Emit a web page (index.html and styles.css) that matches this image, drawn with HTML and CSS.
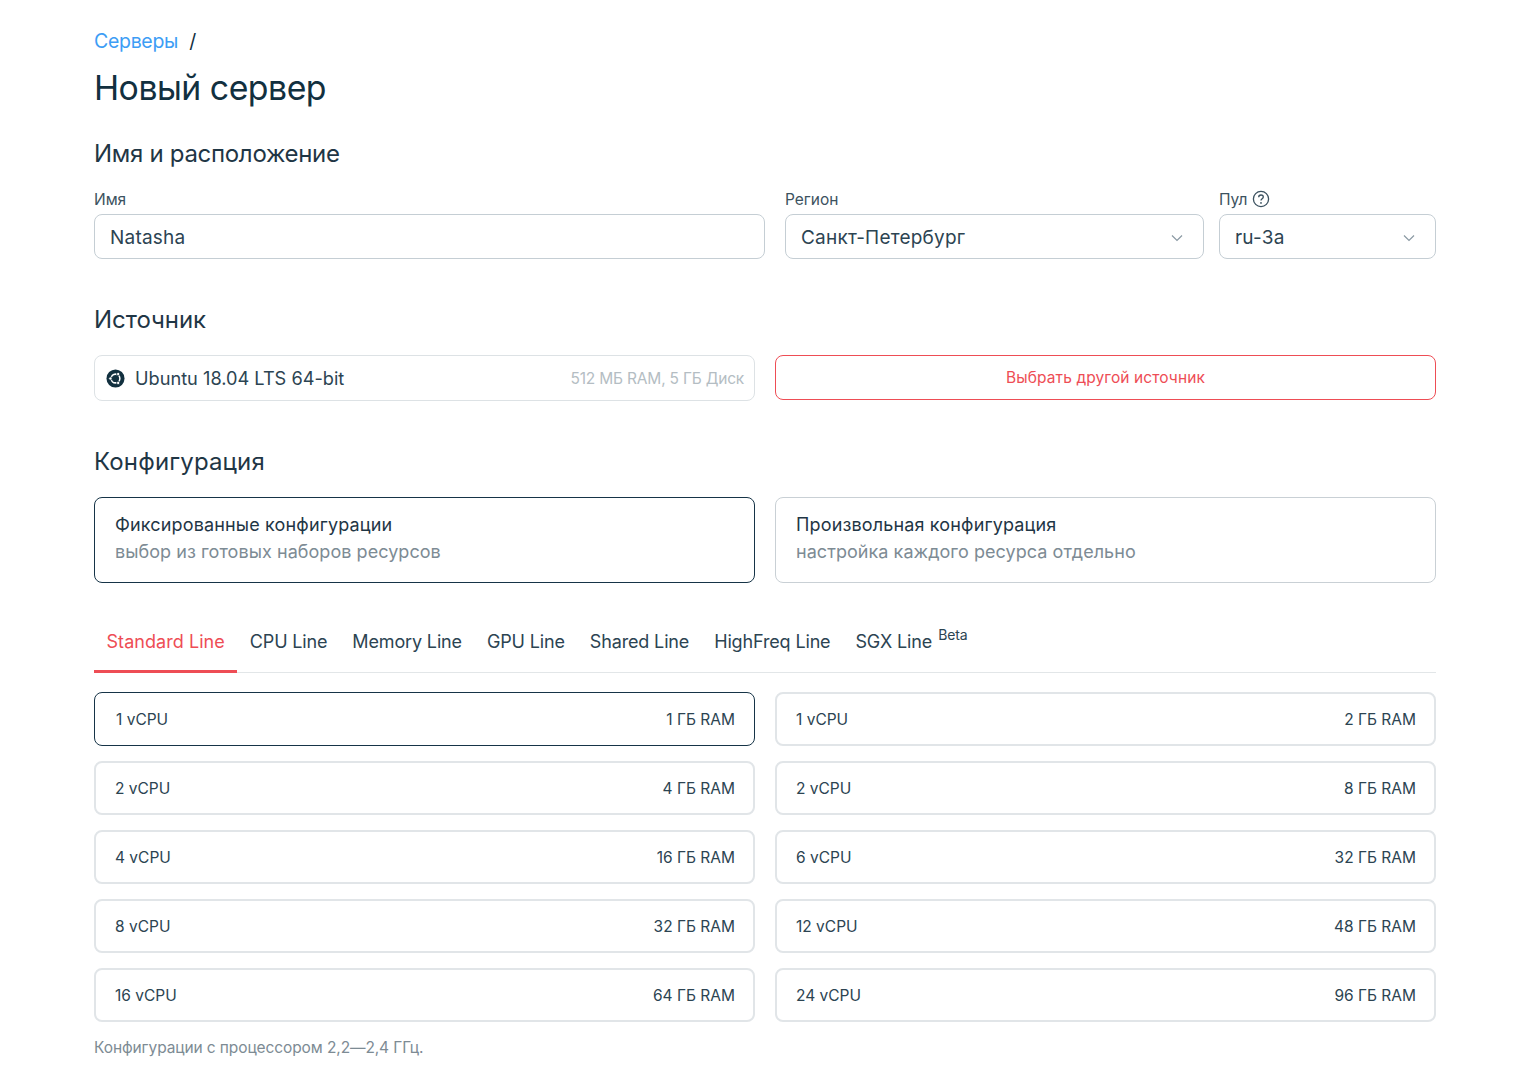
FILE: index.html
```html
<!DOCTYPE html>
<html lang="ru">
<head>
    <meta charset="UTF-8">
    <title>Новый сервер</title>
    <link rel="stylesheet" href="styles.css">
</head>
<body>
    <div class="page">
        <div class="breadcrumb"><a class="crumb-link">Серверы</a><span class="crumb-sep">/</span></div>
        <h1>Новый сервер</h1>

        <h2 class="first-head">Имя и расположение</h2>
        <div class="fields">
            <div class="field field-name">
                <div class="label">Имя</div>
                <div class="control">Natasha</div>
            </div>
            <div class="field field-region">
                <div class="label">Регион</div>
                <div class="control">Санкт-Петербург
                    <svg class="chevron" viewBox="0 0 12 8"><path d="M1 1.5l5 5 5-5"/></svg>
                </div>
            </div>
            <div class="field field-pool">
                <div class="label">Пул
                    <svg class="help" viewBox="0 0 18 18">
                        <circle cx="9" cy="9" r="7.6"/>
                        <path d="M6.7 7.2c0-1.3 1-2.2 2.3-2.2s2.3.9 2.3 2.1c0 1.7-2.3 1.8-2.3 3.5"/>
                        <circle class="help-dot" cx="9" cy="12.9" r=".9"/>
                    </svg>
                </div>
                <div class="control">ru-3a
                    <svg class="chevron" viewBox="0 0 12 8"><path d="M1 1.5l5 5 5-5"/></svg>
                </div>
            </div>
        </div>

        <h2>Источник</h2>
        <div class="two-col source-row">
            <div class="source">
                <svg class="ubuntu" viewBox="0 0 20 20">
                    <circle cx="10" cy="10" r="9.5" fill="#12303f"/>
                    <circle cx="10" cy="10" r="4.6" fill="none" stroke="#fff" stroke-width="1.6"/>
                    <circle cx="4.6" cy="10" r="1.7" fill="#fff" stroke="#12303f" stroke-width=".8"/>
                    <circle cx="12.8" cy="5.3" r="1.7" fill="#fff" stroke="#12303f" stroke-width=".8"/>
                    <circle cx="12.8" cy="14.7" r="1.7" fill="#fff" stroke="#12303f" stroke-width=".8"/>
                </svg>
                <span class="source-name">Ubuntu 18.04 LTS 64-bit</span>
                <span class="source-info">512 МБ RAM, 5 ГБ Диск</span>
            </div>
            <button class="btn-outline">Выбрать другой источник</button>
        </div>

        <h2 class="config-head">Конфигурация</h2>
        <div class="two-col">
            <div class="mode active">
                <div class="mode-title">Фиксированные конфигурации</div>
                <div class="mode-sub">выбор из готовых наборов ресурсов</div>
            </div>
            <div class="mode">
                <div class="mode-title">Произвольная конфигурация</div>
                <div class="mode-sub">настройка каждого ресурса отдельно</div>
            </div>
        </div>

        <div class="tabs">
            <div class="tab current">Standard Line</div>
            <div class="tab">CPU Line</div>
            <div class="tab">Memory Line</div>
            <div class="tab">GPU Line</div>
            <div class="tab">Shared Line</div>
            <div class="tab">HighFreq Line</div>
            <div class="tab">SGX Line<sup class="beta">Beta</sup></div>
        </div>

        <div class="plans">
            <div class="plan active"><span>1 vCPU</span><span>1 ГБ RAM</span></div>
            <div class="plan"><span>1 vCPU</span><span>2 ГБ RAM</span></div>
            <div class="plan"><span>2 vCPU</span><span>4 ГБ RAM</span></div>
            <div class="plan"><span>2 vCPU</span><span>8 ГБ RAM</span></div>
            <div class="plan"><span>4 vCPU</span><span>16 ГБ RAM</span></div>
            <div class="plan"><span>6 vCPU</span><span>32 ГБ RAM</span></div>
            <div class="plan"><span>8 vCPU</span><span>32 ГБ RAM</span></div>
            <div class="plan"><span>12 vCPU</span><span>48 ГБ RAM</span></div>
            <div class="plan"><span>16 vCPU</span><span>64 ГБ RAM</span></div>
            <div class="plan"><span>24 vCPU</span><span>96 ГБ RAM</span></div>
        </div>

        <div class="note">Конфигурации с процессором 2,2—2,4 ГГц.</div>
    </div>
</body>
</html>
```

FILE: styles.css
```css
body {
    margin: 0;
    background-color: #fff;
    color: #1f3645;
    font-family: Inter, "Noto Sans", sans-serif;
}

.page {
    box-sizing: border-box;
    width: 1342px;
    margin-left: 94px;
    padding-top: 29px;
}

.breadcrumb {
    height: 25px;
    line-height: 24px;
    font-size: 19.5px;
    letter-spacing: -0.3px;
}

.crumb-link {
    color: #3d9df5;
}

.crumb-sep {
    margin-left: 11px;
    color: #12303f;
}

h1 {
    margin: 11px 0 0;
    height: 46px;
    line-height: 46px;
    font-size: 33.8px;
    font-weight: 400;
    letter-spacing: -0.5px;
    color: #12303f;
}

h2 {
    margin: 44px 0 18px;
    height: 34px;
    line-height: 34px;
    font-size: 24px;
    font-weight: 400;
    letter-spacing: -0.05px;
    color: #1f3645;
}

h2.first-head {
    margin-top: 26px;
    margin-bottom: 18px;
    letter-spacing: -0.3px;
}

h2.config-head {
    letter-spacing: 0.15px;
}

.fields {
    display: flex;
    gap: 20px;
}

.field-name {
    width: 671px;
}

.field-region {
    width: 419px;
}

.field-pool {
    width: 217px;
    margin-left: -5px;
}

.label {
    display: flex;
    align-items: center;
    gap: 4px;
    height: 20px;
    margin-bottom: 5px;
    font-size: 15.5px;
    color: #3c5260;
}

.help {
    width: 18px;
    height: 18px;
    fill: none;
    stroke: #3c5260;
    stroke-width: 1.3;
}

.help-dot {
    fill: #3c5260;
    stroke: none;
}

.control {
    box-sizing: border-box;
    display: flex;
    align-items: center;
    justify-content: space-between;
    height: 45px;
    padding: 2px 20px 0 15px;
    border: 1px solid #c5ced4;
    border-radius: 8px;
    font-size: 19px;
    letter-spacing: 0.2px;
    color: #2c4452;
}

.chevron {
    width: 12px;
    height: 8px;
    fill: none;
    stroke: #8a99a3;
    stroke-width: 1.2;
}

.two-col {
    display: grid;
    grid-template-columns: 661px 661px;
    gap: 20px;
}

.source-row {
    align-items: start;
}

.source {
    box-sizing: border-box;
    display: flex;
    align-items: center;
    height: 46px;
    padding: 0 10px 0 11px;
    border: 1px solid #dde2e5;
    border-radius: 8px;
}

.ubuntu {
    width: 19px;
    height: 19px;
    margin-right: 10px;
}

.source-name {
    font-size: 18.2px;
    color: #2c4452;
}

.source-info {
    margin-left: auto;
    font-size: 15.5px;
    letter-spacing: -0.2px;
    color: #b4bdc3;
}

.btn-outline {
    height: 45px;
    padding: 0;
    border: 1px solid #ee4d55;
    border-radius: 8px;
    background-color: #fff;
    color: #ee4d55;
    font-family: inherit;
    font-size: 15.5px;
    letter-spacing: 0.1px;
}

.mode {
    box-sizing: border-box;
    height: 86px;
    padding: 13px 20px;
    border: 1px solid #c9d0d5;
    border-radius: 8px;
}

.mode.active {
    border-color: #163447;
}

.mode-title {
    height: 27px;
    line-height: 27px;
    font-size: 18px;
    letter-spacing: 0.15px;
    color: #1f3645;
}

.mode-sub {
    height: 27px;
    line-height: 27px;
    font-size: 18px;
    letter-spacing: 0.05px;
    color: #7d8b94;
}

.tabs {
    display: flex;
    height: 58px;
    margin-top: 31px;
    border-bottom: 1px solid #e2e6e8;
}

.tab {
    box-sizing: border-box;
    height: 59px;
    padding: 16px 12.5px 0;
    line-height: 24px;
    font-size: 18px;
    letter-spacing: -0.15px;
    color: #2c4452;
}

.tab.current {
    color: #ee4d55;
    border-bottom: 3px solid #ee4d55;
    letter-spacing: 0.05px;
}

.beta {
    margin-left: 6px;
    font-size: 14px;
    line-height: 0;
    vertical-align: 8px;
}

.plans {
    display: grid;
    grid-template-columns: 661px 661px;
    gap: 15px 20px;
    margin-top: 19px;
}

.plan {
    box-sizing: border-box;
    display: flex;
    align-items: center;
    justify-content: space-between;
    height: 54px;
    padding: 0 18px 0 19px;
    border: 2px solid #e1e5e8;
    border-radius: 8px;
    font-size: 15.5px;
    color: #2c4452;
}

.plan.active {
    border: 1px solid #163447;
    padding: 0 19px 0 21px;
}

.note {
    margin-top: 15px;
    height: 22px;
    line-height: 22px;
    font-size: 15.5px;
    letter-spacing: -0.1px;
    color: #7d8b94;
}
```
